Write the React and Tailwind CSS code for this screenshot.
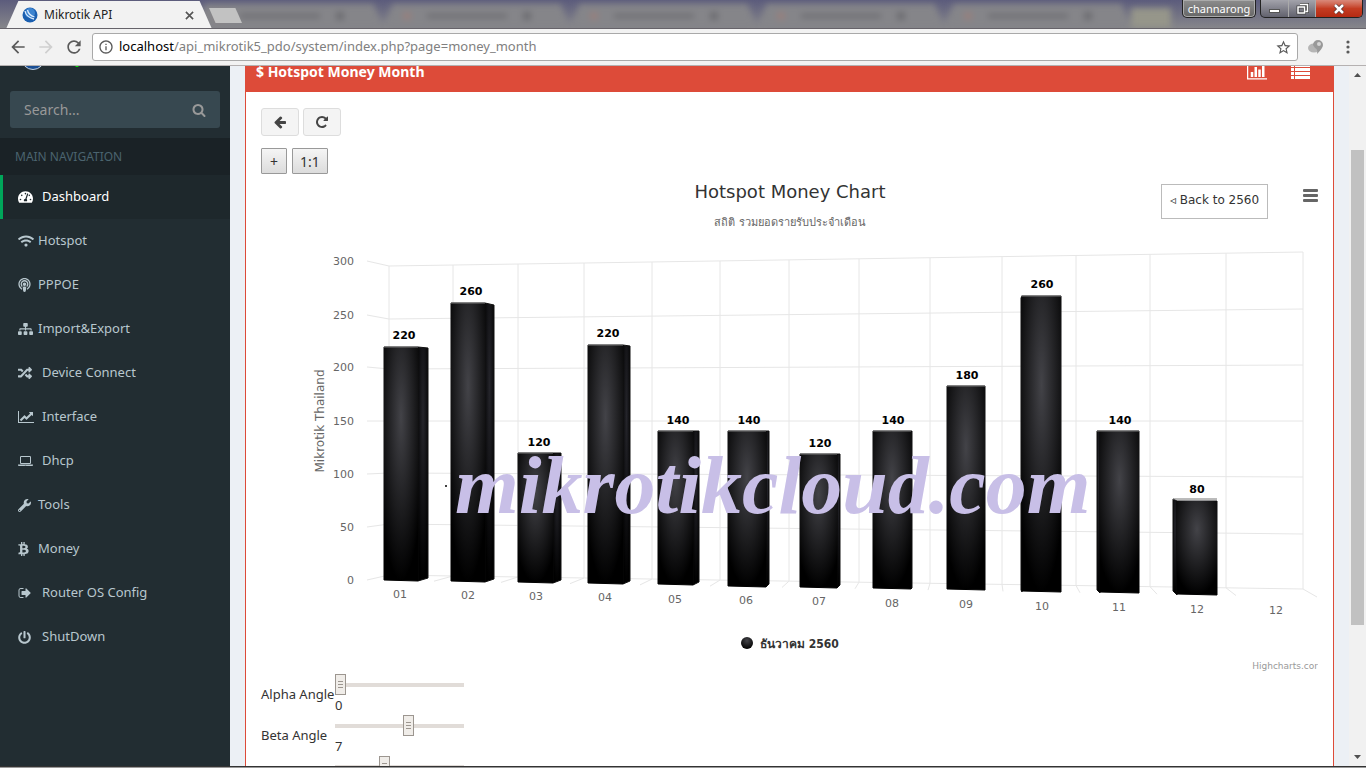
import {
    FaTachometerAlt,
    FaWifi,
    FaPodcast,
    FaSitemap,
    FaRandom,
    FaWrench,
    FaBtc,
    FaPowerOff,
} from "react-icons/fa";
import { MdArrowBack, MdArrowForward, MdRefresh, MdInfoOutline, MdStarBorder } from "react-icons/md";

const glyphs = {
    search: "M1216 832q0-185-131.5-316.5t-316.5-131.5-316.5 131.5-131.5 316.5 131.5 316.5 316.5 131.5 316.5-131.5 131.5-316.5zm512 832q0 52-38 90t-90 38q-54 0-90-38l-343-342q-179 124-399 124-143 0-273.5-55.5t-225-150-150-225-55.5-273.5 55.5-273.5 150-225 225-150 273.5-55.5 273.5 55.5 225 150 150 225 55.5 273.5q0 220-124 399l343 343q37 37 37 90z",
    arrowLeft: "M1664 896v128q0 53-32.5 90.5t-84.5 37.5h-704l293 294q38 36 38 90t-38 90l-75 76q-37 37-90 37-52 0-91-37l-651-652q-37-37-37-90 0-52 37-91l651-650q38-38 91-38 52 0 90 38l75 74q38 38 38 91t-38 91l-293 293h704q52 0 84.5 37.5t32.5 90.5z",
    repeat: "M1664 256v448q0 26-19 45t-45 19h-448q-42 0-59-40-17-39 14-69l138-138q-148-137-349-137-104 0-198.5 40.5t-163.5 109.5-109.5 163.5-40.5 198.5 40.5 198.5 109.5 163.5 163.5 109.5 198.5 40.5q119 0 225-52t179-147q7-10 23-12 15 0 25 9l137 138q9 8 9.5 20.5t-7.5 22.5q-109 132-264 204.5t-327 72.5q-156 0-298-61t-245-164-164-245-61-298 61-298 164-245 245-164 298-61q147 0 284.5 55.5t244.5 156.5l130-129q29-31 70-14 39 17 39 59z",
    signOut: "M704 1440q0 4 1 20t.5 26.5-3 23.5-10 19.5-20.5 6.5h-320q-119 0-203.5-84.5t-84.5-203.5v-704q0-119 84.5-203.5t203.5-84.5h320q13 0 22.5 9.5t9.5 22.5q0 4 1 20t.5 26.5-3 23.5-10 19.5-20.5 6.5h-320q-66 0-113 47t-47 113v704q0 66 47 113t113 47h312l11.5 1 11.5 3 8 5.5 7 9 2 13.5zm928-544q0 26-19 45l-544 544q-19 19-45 19t-45-19-19-45v-288h-448q-26 0-45-19t-19-45v-384q0-26 19-45t45-19h448v-288q0-26 19-45t45-19 45 19l544 544q19 19 19 45z",
    lineChart: "M2048 1536v128h-2048v-1536h128v1408h1920zm-128-1248v435q0 21-19.5 29.5t-35.5-7.5l-121-121-633 633q-10 10-23 10t-23-10l-233-233-416 416-192-192 585-585q10-10 23-10t23 10l233 233 464-464-121-121q-16-16-7.5-35.5t29.5-19.5h435q14 0 23 9t9 23z",
    barChart: "M640 896v512h-256v-512h256zm384-512v1024h-256v-1024h256zm1024 1152v128h-2048v-1536h128v1408h1920zm-640-896v768h-256v-768h256zm384-384v1152h-256v-1152h256z",
    laptop: "M416 1280q-66 0-113-47t-47-113v-704q0-66 47-113t113-47h1088q66 0 113 47t47 113v704q0 66-47 113t-113 47h-1088zm-32-864v704q0 13 9.5 22.5t22.5 9.5h1088q13 0 22.5-9.5t9.5-22.5v-704q0-13-9.5-22.5t-22.5-9.5h-1088q-13 0-22.5 9.5t-9.5 22.5zm1376 928h160v96q0 40-47 68t-113 28h-1600q-66 0-113-28t-47-68v-96h1760zm-720 96q16 0 16-16t-16-16h-160q-16 0-16 16t16 16h160z",
};

function Glyph({ name, width = 1792, className }) {
    return (
        <svg viewBox={`0 0 ${width} 1792`} fill="currentColor" className={className} aria-hidden="true">
            <path d={glyphs[name]} />
        </svg>
    );
}

const navItems = [
    { label: "Dashboard", icon: <FaTachometerAlt className="w-[15px] h-[14px]" />, wide: true, active: true },
    { label: "Hotspot", icon: <FaWifi className="w-4 h-[14px]" /> },
    { label: "PPPOE", icon: <FaPodcast className="w-[13px] h-[14px]" /> },
    { label: "Import&Export", icon: <FaSitemap className="w-[15px] h-[14px]" /> },
    { label: "Device Connect", icon: <FaRandom className="w-[14px] h-[14px]" />, wide: true },
    { label: "Interface", icon: <Glyph name="lineChart" width={2048} className="w-4 h-[14px]" />, wide: true },
    { label: "Dhcp", icon: <Glyph name="laptop" width={1920} className="w-[15px] h-[14px]" />, wide: true },
    { label: "Tools", icon: <FaWrench className="w-[13px] h-[13px]" /> },
    { label: "Money", icon: <FaBtc className="w-[11px] h-[14px]" /> },
    { label: "Router OS Config", icon: <Glyph name="signOut" className="w-[14px] h-[14px]" />, wide: true },
    { label: "ShutDown", icon: <FaPowerOff className="w-[13px] h-[13px]" />, wide: true },
];

function TabStrip() {
    return (
        <div className="relative flex h-[29px] shrink-0 overflow-hidden bg-gradient-to-b from-[#5c5c7c] to-[#86868a] border-b border-[#66636a]">
            {/* Blurred tabs in the background */}
            <div className="absolute inset-0 flex pl-[196px] blur-[3px]" aria-hidden="true">
                {[0, 1, 2, 3, 4].map((tab) => (
                    <div
                        key={tab}
                        className="mt-1 flex w-[187px] items-center gap-4 bg-[#858589] px-5 [clip-path:polygon(5%_0,95%_0,100%_100%,0_100%)]"
                    >
                        <span className="h-2 w-2 rounded-full bg-[#997f7c]" />
                        <span className="h-1 w-20 bg-[#6c6c71]" />
                        <span className="h-2 w-2 bg-[#6c6c71]" />
                    </div>
                ))}
                <span className="mt-2 h-5 w-10 bg-[#96968a]" />
            </div>
            <div className="relative flex w-full items-start">
                <div className="ml-[6px] mt-[1px] flex h-7 w-[206px] items-center bg-[#f2f2f2] pl-4 pr-[18px] [clip-path:polygon(6%_0,94%_0,100%_100%,0_100%)]">
                    <svg viewBox="0 0 16 16" className="h-4 w-4" aria-hidden="true">
                        <circle cx="8" cy="8" r="7.5" fill="#1b5fb0" />
                        <circle cx="8" cy="6" r="5" fill="#3d84d0" />
                        <path d="M3 4q1 6 9 8M5.500 3q1 5 7 7" fill="none" stroke="#dcecff" strokeWidth="1.300" />
                    </svg>
                    <span className="ml-[6px] flex-1 font-['Noto_Sans',sans-serif] text-[12px] text-[#222]">Mikrotik API</span>
                    <button type="button" aria-label="Close tab" className="text-[#555]">
                        <svg viewBox="0 0 10 10" className="h-[9px] w-[9px]" stroke="currentColor" strokeWidth="1.800">
                            <path d="M1 1l8 8M9 1l-8 8" />
                        </svg>
                    </button>
                </div>
                <button
                    type="button"
                    aria-label="New tab"
                    className="-ml-[3px] mt-2 h-[15px] w-[33px] bg-[#c2c2c2] [clip-path:polygon(0_0,80%_0,100%_100%,20%_100%)]"
                />
                <div className="ml-auto flex h-[18px] pr-[3px]">
                    <button
                        type="button"
                        className="mr-1 w-[74px] rounded-b-[5px] border border-t-0 border-[#222] bg-gradient-to-b from-[#8d8d8d] to-[#666] text-center font-['Noto_Sans',sans-serif] text-[11px] leading-4 text-white shadow-[inset_0_0_0_1px_#aaa]"
                    >
                        channarong
                    </button>
                    <div className="flex overflow-hidden rounded-b-[5px] border border-t-0 border-[#222] bg-gradient-to-b from-[#a3a3ab] to-[#62626e]">
                        <button type="button" aria-label="Minimize" className="flex w-7 items-center justify-center border-r border-[#aaa]">
                            <span className="mt-1 h-1 w-[11px] border border-[#555] bg-white" />
                        </button>
                        <button type="button" aria-label="Restore" className="flex w-[27px] items-center justify-center border-r border-[#aaa]">
                            <svg viewBox="0 0 13 12" className="h-3 w-[13px]" fill="none">
                                <path d="M4 1.500h7.500v7h-2M2 4h6.500v6H2z" stroke="#444" strokeWidth="3" />
                                <path d="M4 1.500h7.500v7h-2M2 4h6.500v6H2z" stroke="#fff" strokeWidth="1.500" />
                            </svg>
                        </button>
                        <button type="button" aria-label="Close" className="flex w-[46px] items-center justify-center bg-gradient-to-b from-[#d9897a] via-[#c43c22] to-[#b52a12]">
                            <svg viewBox="0 0 12 10" className="h-[10px] w-3">
                                <path d="M2 1l8 8M10 1l-8 8" stroke="#533" strokeWidth="4" />
                                <path d="M2 1l8 8M10 1l-8 8" stroke="#fff" strokeWidth="2.500" />
                            </svg>
                        </button>
                    </div>
                </div>
            </div>
        </div>
    );
}

function Toolbar() {
    return (
        <div className="flex h-[37px] shrink-0 items-center border-b border-[#b5b1b1] bg-[#f2f2f2] pl-2 pr-4 text-[#5a5a5a]">
            <button type="button" aria-label="Back" className="w-7"><MdArrowBack className="h-5 w-5" /></button>
            <button type="button" aria-label="Forward" className="w-7 text-[#cfcfcf]"><MdArrowForward className="h-5 w-5" /></button>
            <button type="button" aria-label="Reload" className="w-7"><MdRefresh className="h-5 w-5" /></button>
            <div className="flex h-7 flex-1 items-center rounded-[3px] border border-[#a9a9a9] bg-white px-[5px]">
                <MdInfoOutline className="h-4 w-4 shrink-0" />
                <div className="ml-[5px] flex-1 font-['Noto_Sans',sans-serif] text-[13px] text-[#808080]">
                    <span className="text-black">localhost</span>/api_mikrotik5_pdo/system/index.php?page=money_month
                </div>
                <button type="button" aria-label="Bookmark"><MdStarBorder className="h-[17px] w-[17px]" /></button>
            </div>
            <svg viewBox="0 0 16 14" className="ml-[10px] h-[14px] w-4" aria-hidden="true">
                <ellipse cx="6" cy="8" rx="6" ry="4.500" fill="#b5b5b5" />
                <path d="M5 5a5 5 0 0 1 10 0q0 3-6 9q1-5-2-6z" fill="#999" />
                <circle cx="11" cy="4" r="2" fill="#d5d5d5" />
            </svg>
            <button type="button" aria-label="Menu" className="ml-[22px]">
                <svg viewBox="0 0 4 14" className="h-[14px] w-1" fill="currentColor">
                    <circle cx="2" cy="2" r="1.600" /><circle cx="2" cy="7" r="1.600" /><circle cx="2" cy="12" r="1.600" />
                </svg>
            </button>
        </div>
    );
}

function Sidebar() {
    return (
        <aside className="w-[230px] shrink-0 bg-[#222d32] text-[13px] text-[#b8c7ce]">
            {/* User panel, scrolled almost out of view */}
            <div className="h-[25px] overflow-hidden pl-[21px]">
                <div className="-mt-5 flex items-end gap-[30px]">
                    <span className="h-6 w-6 rounded-full border border-[#c5d2e0] bg-[#1b4f94]" />
                    <span className="mb-[3px] h-2 w-1 rounded-full bg-[#0e0]" />
                </div>
            </div>
            <form className="mx-[10px] flex h-[37px] items-center rounded-[3px] bg-[#374850] pl-[14px] pr-[14px] text-[#999]">
                <input
                    type="text"
                    aria-label="Search"
                    placeholder="Search..."
                    className="min-w-0 flex-1 bg-transparent text-[14px] outline-none placeholder:text-[#999]"
                />
                <button type="button" aria-label="Submit search"><Glyph name="search" className="h-[14px] w-[14px]" /></button>
            </form>
            <div className="mt-[10px] h-[37px] bg-[#1a2226] pl-[15px] text-[12px] leading-[37px] text-[#4b646f]">
                MAIN NAVIGATION
            </div>
            <nav>
                {navItems.map((item) => (
                    <a
                        key={item.label}
                        href="#"
                        className={
                            item.active
                                ? "flex h-11 items-center border-l-[3px] border-[#00a65a] bg-[#1e282c] pl-[15px] text-white"
                                : "flex h-11 items-center border-l-[3px] border-transparent pl-[15px]"
                        }
                    >
                        <span className={item.wide ? "w-6" : "w-5"}>{item.icon}</span>
                        {item.label}
                    </a>
                ))}
            </nav>
        </aside>
    );
}

/* x: left edge, front face start/end, right edge; y: tops and bottoms of front and side faces */
const bars = [
    { value: 220, x: [123, 123, 157, 167], front: [173, 407], side: [174, 404], label: [143, 165] },
    { value: 260, x: [190, 190, 224, 233], front: [129, 408], side: [131, 405], label: [210, 121] },
    { value: 120, x: [257, 257, 292, 300], front: [279, 409], side: [279, 406], label: [278, 272] },
    { value: 220, x: [327, 327, 362, 369], front: [171, 410], side: [172, 407], label: [347, 163] },
    { value: 140, x: [397, 397, 432, 438], front: [257, 411], side: [257, 408], label: [417, 250] },
    { value: 140, x: [467, 467, 505, 508], front: [257, 413], side: [257, 410], label: [488, 250] },
    { value: 120, x: [539, 539, 576, 579], front: [280, 414], side: [280, 411], label: [559, 273] },
    { value: 140, x: [612, 612, 650, 651], front: [257, 415], side: [257, 414], label: [632, 250] },
    { value: 180, x: [686, 686, 724, 724], front: [212, 416], side: [212, 416], label: [706, 205] },
    { value: 260, x: [760, 761, 800, 800], front: [122, 418], side: [124, 416], label: [781, 114] },
    { value: 140, x: [836, 839, 878, 878], front: [257, 419], side: [257, 416], label: [859, 250] },
    { value: 80, x: [912, 916, 956, 956], front: [327, 421], side: [325, 417], label: [936, 319] },
];

const columns = [
    [128, 106], [192, 173], [257, 240], [323, 309], [391, 379], [459, 449], [528, 521],
    [598, 594], [669, 667], [741, 742], [815, 819], [889, 896], [965, 975], [1042, 1056],
];

const levels = [
    { value: 300, y: [87, 92, 78] },
    { value: 250, y: [141, 145, 135] },
    { value: 200, y: [193, 195, 191] },
    { value: 150, y: [247, 247, 247] },
    { value: 100, y: [300, 299, 303] },
    { value: 50, y: [353, 350, 360] },
    { value: 0, y: [406, 401, 415] },
];

const months = [
    ["01", 139, 424], ["02", 207, 425], ["03", 275, 426], ["04", 344, 427], ["05", 414, 429],
    ["06", 485, 430], ["07", 558, 431], ["08", 631, 433], ["09", 705, 434], ["10", 781, 436],
    ["11", 858, 437], ["12", 936, 439], ["12", 1015, 440],
];

function Bar({ bar }) {
    const [left, start, end, right] = bar.x;
    const [top, bottom] = bar.front;
    const [sideTop, sideBottom] = bar.side;
    return (
        <g strokeWidth="1" strokeLinejoin="round">
            {right > end && (
                <path d={`M${end} ${top}L${right} ${sideTop}V${sideBottom}L${end} ${bottom}z`} fill="url(#side)" stroke="#111" />
            )}
            {start > left && (
                <path d={`M${left} ${sideTop}L${start} ${top}V${bottom}L${left} ${sideBottom}z`} fill="url(#side)" stroke="#111" />
            )}
            <path d={`M${start} ${top}H${end}V${bottom}L${start} ${bottom - 1}z`} fill="url(#face)" stroke="url(#face)" />
            <path d={`M${left} ${Math.min(top, sideTop)}H${end}`} stroke="#777" />
        </g>
    );
}

function MoneyChart() {
    return (
        <svg
            viewBox="0 0 1057 500"
            className="block h-auto w-full font-['DejaVu_Sans','Noto_Sans',sans-serif] text-[11px]"
            role="img"
            aria-label="Hotspot Money Chart"
        >
            <defs>
                <radialGradient id="face" cx="0.5" cy="0.3" r="0.7">
                    <stop offset="0" stopColor="#434348" />
                    <stop offset="1" stopColor="#000" />
                </radialGradient>
                <radialGradient id="side" cx="0.5" cy="0.3" r="0.7">
                    <stop offset="0" stopColor="#25252b" />
                    <stop offset="1" stopColor="#000" />
                </radialGradient>
            </defs>

            <text x="529" y="24" textAnchor="middle" fill="#333" className="text-[18px]">Hotspot Money Chart</text>
            <text x="529" y="52" textAnchor="middle" fill="#666" className="text-[11px]">สถิติ รวมยอดรายรับประจำเดือน</text>

            {/* Grid */}
            <g fill="none" stroke="#e6e6e6">
                {columns.map(([x, tick], i) => {
                    const t = (x - 128) / 914;
                    return <path key={i} d={`M${x} ${92 - 14 * t}V${401 + 14 * t}${i > 0 ? `L${tick} ${406 + 17 * t}` : ""}`} />;
                })}
                {levels.map(({ value, y }) => (
                    <path key={value} d={`M106 ${y[0]}L128 ${y[1]}L1042 ${y[2]}`} />
                ))}
            </g>

            <g fill="#666">
                {levels.map(({ value, y }) => (
                    <text key={value} x="93" y={y[0] + 4} textAnchor="end">{value}</text>
                ))}
                {months.map(([label, x, y], i) => (
                    <text key={i} x={x} y={y} textAnchor="middle">{label}</text>
                ))}
                <text transform="translate(63 247) rotate(-90)" textAnchor="middle" className="text-[12px]">Mikrotik Thailand</text>
            </g>

            {bars.map((bar, i) => <Bar key={i} bar={bar} />)}
            <g fill="#000" className="font-bold">
                {bars.map((bar, i) => (
                    <text key={i} x={bar.label[0]} y={bar.label[1]} textAnchor="middle">{bar.value}</text>
                ))}
            </g>

            {/* Watermark */}
            <circle cx="185" cy="312" r="1" fill="#000" />
            <text x="194" y="339" fill="#c8bfe7" className="font-['Liberation_Serif',serif] text-[82px] font-bold italic">
                mikrotikcloud.com
            </text>

            {/* Legend and credits */}
            <circle cx="486" cy="469" r="6" fill="url(#face)" />
            <text x="499" y="474" fill="#333" className="font-['DejaVu_Sans_Condensed','DejaVu_Sans',sans-serif] text-[12px] font-bold">ธันวาคม 2560</text>
            <text x="1057" y="495" textAnchor="end" fill="#999" className="text-[9px]">Highcharts.cor</text>
        </svg>
    );
}

const angles = [
    { id: "alpha", label: "Alpha Angle", min: 0, max: 45, value: 0 },
    { id: "beta", label: "Beta Angle", min: -45, max: 45, value: 7 },
    { id: "depth", label: "Depth", min: 20, max: 100, value: 50 },
];

function Sliders() {
    return (
        <div>
            {angles.map((angle) => (
                <div key={angle.id} className="flex h-[41px] items-center">
                    <label htmlFor={angle.id} className="w-[74px] whitespace-nowrap">{angle.label}</label>
                    <div>
                        <input
                            id={angle.id}
                            type="range"
                            min={angle.min}
                            max={angle.max}
                            defaultValue={angle.value}
                            className="block h-[21px] w-[129px] appearance-none bg-transparent bg-[linear-gradient(#e1dcd8,#e1dcd8)] bg-[length:100%_4px] bg-center bg-no-repeat [&::-webkit-slider-thumb]:h-[21px] [&::-webkit-slider-thumb]:w-[11px] [&::-webkit-slider-thumb]:appearance-none [&::-webkit-slider-thumb]:border [&::-webkit-slider-thumb]:border-[#9c9690] [&::-webkit-slider-thumb]:bg-[#f0ede9] [&::-webkit-slider-thumb]:bg-[repeating-linear-gradient(#9c9690_0_1px,transparent_1px_3px)] [&::-webkit-slider-thumb]:bg-[length:5px_7px] [&::-webkit-slider-thumb]:bg-center [&::-webkit-slider-thumb]:bg-no-repeat"
                        />
                        <span className="block h-5 leading-5">{angle.value}</span>
                    </div>
                </div>
            ))}
        </div>
    );
}

function MoneyPanel() {
    return (
        <section className="mx-[15px] flex min-h-0 flex-1 flex-col border-x border-[#dd4b39] bg-white text-[13px] text-[#333]">
            <header className="-mt-[15px] flex h-[41px] shrink-0 items-center justify-between bg-[#dd4b39] pl-[10px] pr-[23px] text-white">
                <h3 className="text-[14px] font-bold">$ Hotspot Money Month</h3>
                <div className="flex gap-6">
                    <button type="button" aria-label="Chart view"><Glyph name="barChart" width={2048} className="h-[18px] w-5" /></button>
                    <button type="button" aria-label="List view">
                        <svg viewBox="0 0 19 15" className="h-[15px] w-[19px]" fill="currentColor">
                            <path d="M0 0h3v3H0zM4 0h15v3H4zM0 4h3v3H0zM4 4h15v3H4zM0 8h3v3H0zM4 8h15v3H4zM0 12h3v3H0zM4 12h15v3H4z" />
                        </svg>
                    </button>
                </div>
            </header>
            <div className="px-[15px] pt-4">
                <div className="flex gap-1">
                    <button type="button" aria-label="Back" className="flex h-7 w-[38px] items-center justify-center rounded-[3px] border border-[#ddd] bg-[#f4f4f4] text-[#444]">
                        <Glyph name="arrowLeft" className="h-[14px] w-[14px]" />
                    </button>
                    <button type="button" aria-label="Reload" className="flex h-7 w-[38px] items-center justify-center rounded-[3px] border border-[#ddd] bg-[#f4f4f4] text-[#444]">
                        <Glyph name="repeat" className="h-[14px] w-[14px]" />
                    </button>
                </div>
                <div className="mt-3 flex gap-[5px]">
                    <button type="button" className="h-[26px] w-[26px] rounded-[1px] border border-[#999] bg-gradient-to-b from-[#f5f5f5] to-[#dcdcdc] text-[14px]">+</button>
                    <button type="button" className="h-[26px] w-9 rounded-[1px] border border-[#999] bg-gradient-to-b from-[#f5f5f5] to-[#dcdcdc] text-[14px]">1:1</button>
                </div>
                <div className="relative">
                    <MoneyChart />
                    <button type="button" className="absolute right-[50px] top-[10px] h-[35px] w-[107px] whitespace-nowrap border border-[#bbb] bg-white pb-1 font-['DejaVu_Sans',sans-serif] text-[12px]">
                        ◃ Back to 2560
                    </button>
                    <button type="button" aria-label="Chart menu" className="absolute right-0 top-[15px] flex w-[15px] flex-col gap-[2px]">
                        <span className="h-[3px] w-full rounded-[1px] bg-[#666]" />
                        <span className="h-[3px] w-full rounded-[1px] bg-[#666]" />
                        <span className="h-[3px] w-full rounded-[1px] bg-[#666]" />
                    </button>
                </div>
                <Sliders />
            </div>
        </section>
    );
}

export default function App() {
    return (
        <div className="flex h-screen flex-col overflow-hidden font-['Noto_Sans',sans-serif]">
            <TabStrip />
            <Toolbar />
            <div className="flex min-h-0 flex-1 overflow-hidden">
                <Sidebar />
                <main className="flex min-w-0 flex-1 flex-col overflow-hidden bg-[#ecf0f5]">
                    <MoneyPanel />
                </main>
                {/* Scrollbar */}
                <div className="flex w-[17px] shrink-0 flex-col items-center bg-[#f1f1f1]" aria-hidden="true">
                    <svg viewBox="0 0 7 4" className="mt-[7px] h-1 w-[7px]"><path d="M0 4L3.500 0L7 4z" fill="#505050" /></svg>
                    <div className="mt-[73px] h-[475px] w-[13px] bg-[#c1c1c1]" />
                    <svg viewBox="0 0 7 4" className="mb-[7px] mt-auto h-1 w-[7px]"><path d="M0 0L3.500 4L7 0z" fill="#505050" /></svg>
                </div>
            </div>
            <div className="h-[2px] shrink-0 border-t border-[#333] bg-[#999]" />
        </div>
    );
}
